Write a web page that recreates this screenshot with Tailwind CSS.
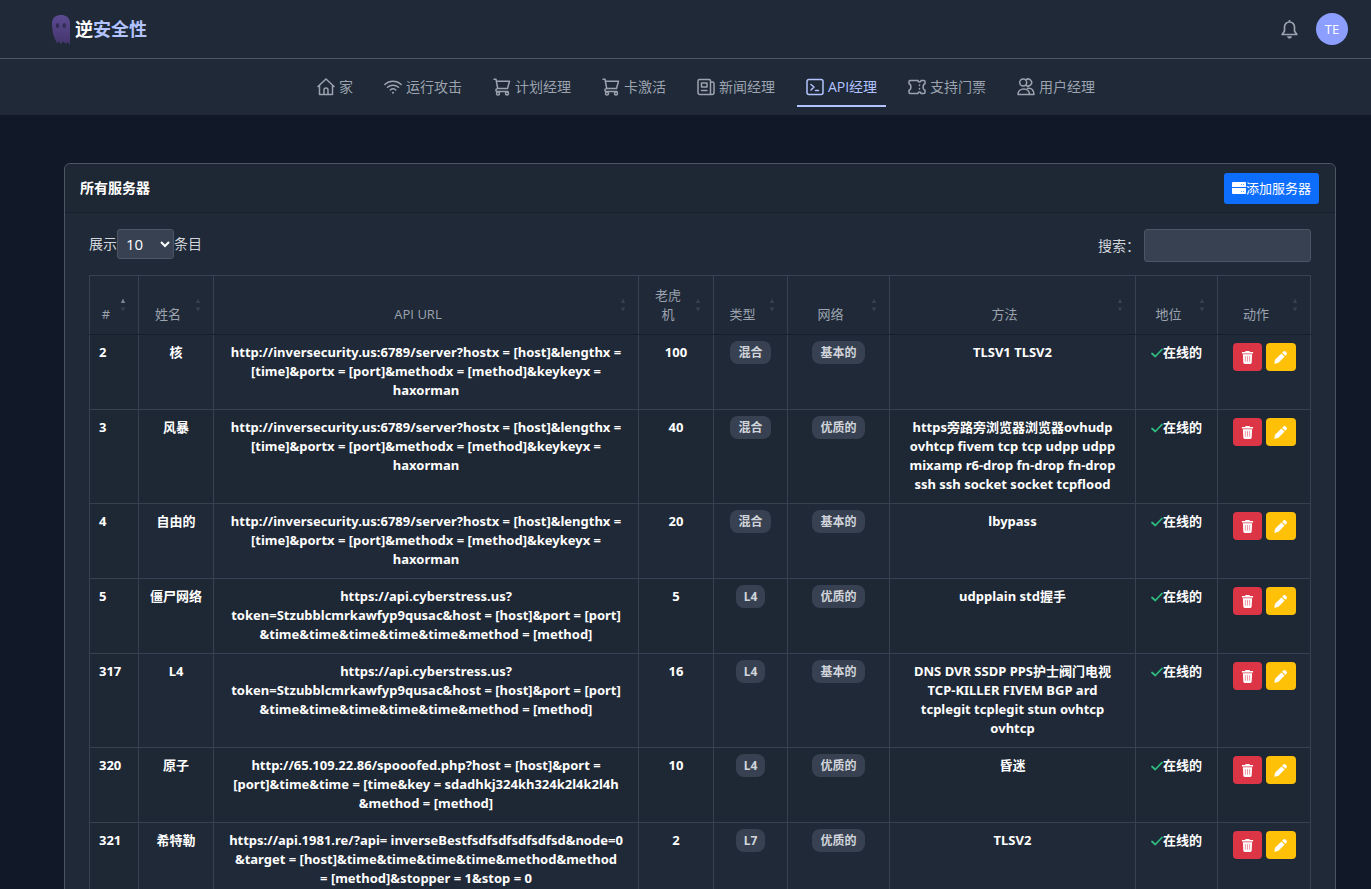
<!DOCTYPE html>
<html lang="zh-CN">
<head>
    <meta charset="UTF-8">
    <meta name="viewport" content="width=device-width, initial-scale=1.0">
    <title>API经理</title>
    <script src="https://cdn.jsdelivr.net/npm/@tailwindcss/browser@4"></script>
    <style>
        body {
            font-family: 'Open Sans', 'Noto Sans CJK SC', sans-serif;
        }
        tbody {
            font-family: 'Noto Sans', 'Noto Sans CJK SC', sans-serif;
        }
    </style>
</head>
<body class="bg-[#111827] text-[#d1d5db] text-sm">

    <!-- Iconos -->
    <svg class="hidden">
        <symbol id="trash" viewBox="0 0 14 14"><path fill="currentColor" d="M5 0h4l.7 1H13v1.800H1V1h3.300zM2 3.500h10l-.5 9a1.500 1.500 0 0 1-1.500 1.500H4a1.500 1.500 0 0 1-1.500-1.500z"/><path stroke="#dc3545" stroke-opacity=".6" stroke-width=".9" d="M4.700 5.500v6M7 5.500v6M9.300 5.500v6"/></symbol>
        <symbol id="pencil" viewBox="0 0 14 14"><path fill="currentColor" d="M8 2.600 11.400 6 4.800 12.600 1 13.600a.5.5 0 0 1-.6-.6l1-3.800zM8.800 1.800l1-1a2 2 0 0 1 2.900 0l.5.5a2 2 0 0 1 0 2.900l-1 1z"/></symbol>
        <symbol id="check" viewBox="0 0 12 12"><path fill="none" stroke="currentColor" stroke-width="1.700" stroke-linecap="round" stroke-linejoin="round" d="M1 6.500 4.300 9.500 11 2.500"/></symbol>
        <symbol id="sort" viewBox="0 0 6 14"><path fill="currentColor" d="M3 .5 5.200 5H.8zM3 13.500.8 9.500h4.400z"/></symbol>
        <symbol id="sort-asc" viewBox="0 0 6 14"><path fill="#7b8492" d="M3 .5 5.200 5H.8z"/><path fill="currentColor" d="M3 13.500.8 9.500h4.400z"/></symbol>
        <symbol id="cart" viewBox="0 0 18 18"><g fill="none" stroke="currentColor" stroke-width="1.500" stroke-linecap="round" stroke-linejoin="round"><path d="M1 1.200h2L4.700 10.500H14.500L16.500 3.200H3.400M4.700 10.500C2.300 11 2.300 13.500 4.500 13.500H15"/><circle cx="5" cy="15.500" r="1.500" fill="#1f2937"/><circle cx="14" cy="15.500" r="1.500" fill="#1f2937"/></g></symbol>
    </svg>

    <!-- Cabecera -->
    <header class="flex items-center justify-between h-[59px] bg-[#1f2937] border-b border-[#4b5563] pl-[52px] pr-[23px]">
        <a href="#" class="flex items-center gap-[5px] text-lg font-bold text-white">
            <svg class="w-[18px] h-[31px]" viewBox="0 0 18 31"><defs><linearGradient id="g" x2="0" y2="1"><stop stop-color="#5b4a92"/><stop offset="1" stop-color="#43356c"/></linearGradient></defs><path fill="url(#g)" d="M0 8C1 3 4 1 9 1s8 2 9 7v23l-2.500-3-1 1-1 1-2-2.500L9 30l-2.500-3-1 3-2.500-5C1 21 0 16 0 8z"/><ellipse cx="5.500" cy="11.500" rx="1.700" ry="2.500" fill="#312c52"/><ellipse cx="12.300" cy="11.500" rx="1.700" ry="2.500" fill="#312c52"/></svg>
            <span>逆<span class="text-[#b2c3ff]">安全性</span></span>
        </a>
        <div class="flex items-center gap-[18px]">
            <button type="button" aria-label="通知" class="text-[#9ca3af]">
                <svg class="block w-[17px] h-[19px]" viewBox="0 0 17 19" fill="none" stroke="currentColor" stroke-width="1.700" stroke-linejoin="round"><path d="M8.500 0v2M3.500 7a5 5 0 0 1 10 0v4l2.300 3.500H1.200L3.500 11z"/><path fill="currentColor" stroke="none" d="M6 16.200h5c-.4 1.600-1.300 2.300-2.500 2.300S6.400 17.800 6 16.200z"/></svg>
            </button>
            <button type="button" class="size-8 rounded-full bg-[#8c9eff] text-white text-[13px]">TE</button>
        </div>
    </header>

    <!-- Menú -->
    <nav class="flex justify-center gap-[13px] h-14 pl-[41px] bg-[#1f2937] text-[#9ca3af] [&>a]:flex [&>a]:items-center [&>a]:gap-1 [&>a]:px-[9px] [&>a]:h-12 [&>a]:pt-[10px] [&>a]:border-b-2 [&>a]:border-transparent [&_svg]:size-[18px]">
        <a href="#"><svg viewBox="0 0 18 18" fill="none" stroke="currentColor" stroke-width="1.500" stroke-linejoin="round" stroke-linecap="round"><path d="M1 8.500 9 1l8 7.500M2.500 7.500v9h13v-9M7 16.500v-4.500a2 2 0 0 1 4 0v4.500"/></svg>家</a>
        <a href="#"><svg viewBox="0 0 18 18" fill="none" stroke="currentColor" stroke-width="1.500" stroke-linecap="round"><path d="M.8 6.500c4.700-4.300 11.700-4.300 16.400 0M3.500 9.300c3.200-2.900 7.800-2.900 11 0M6.300 12c1.600-1.400 3.800-1.400 5.400 0"/><circle cx="9" cy="14.800" r="1" fill="currentColor" stroke="none"/></svg>运行攻击</a>
        <a href="#"><svg><use href="#cart"/></svg>计划经理</a>
        <a href="#"><svg><use href="#cart"/></svg>卡激活</a>
        <a href="#"><svg viewBox="0 0 18 18" fill="none" stroke="currentColor" stroke-width="1.500" stroke-linejoin="round" stroke-linecap="round"><path d="M13.500 14V3a1.500 1.500 0 0 0-1.500-1.500H2.500A1.500 1.500 0 0 0 1 3v11.500a2 2 0 0 0 2 2h12a2 2 0 0 0 2-2V5.500a1.500 1.500 0 0 0-1.500-1.500h-2M13.500 14a1.700 1.700 0 0 0 1.500 2.500M4.500 5H10v4H4.500zM4.500 12.500H10"/></svg>新闻经理</a>
        <a href="#" aria-current="page" class="text-[#b2c3ff] border-[#b2c3ff]!"><svg viewBox="0 0 18 18" fill="none" stroke="currentColor" stroke-width="1.500" stroke-linejoin="round" stroke-linecap="round"><rect x="1" y="1.500" width="16" height="15" rx="2"/><path d="m5 6.500 3 2.500-3 3M9.500 12.500H12.500"/></svg>API经理</a>
        <a href="#"><svg viewBox="0 0 18 18" fill="none" stroke="currentColor" stroke-width="1.500" stroke-linejoin="round" stroke-linecap="round"><path d="M10 2.500H2a1 1 0 0 0-1 1v2.300c2.500.7 2.500 5.700 0 6.400v2.300a1 1 0 0 0 1 1h8M13 2.500h3a1 1 0 0 1 1 1v2.300c-2.500.7-2.500 5.700 0 6.400v2.300a1 1 0 0 1-1 1h-3M10 2.500a1.500 1.500 0 0 0 3 0M10 15.500a1.500 1.500 0 0 1 3 0M11.500 7v.5M11.500 10.500v.5"/></svg>支持门票</a>
        <a href="#"><svg viewBox="0 0 18 18" fill="none" stroke="currentColor" stroke-width="1.500" stroke-linejoin="round" stroke-linecap="round"><circle cx="6.200" cy="4.500" r="3.500"/><path d="M9 1.700a3.500 3.500 0 1 1 0 5.600M1 16.500c0-7.500 11.500-7.500 11.500 0zM10.500 10.300c4-.8 6.500 2 6.500 6.200h-4.500"/></svg>用户经理</a>
    </nav>

    <main class="ml-16 mr-[35px] mt-12">
        <section class="bg-[#1f2937] border border-[#4b5563] rounded-md">
            <div class="flex items-center justify-between h-[49px] pl-[15px] pr-4 bg-[#1e2834] border-b border-[#19212d] rounded-t-md">
                <h1 class="font-bold text-white">所有服务器</h1>
                <button type="button" class="flex items-center h-[31px] px-2 rounded-[3px] bg-[#0d6efd] text-white text-[13px]">
                    <svg class="size-[14px]" viewBox="0 0 14 14"><path fill="currentColor" d="M1 1h12a1 1 0 0 1 1 1v4H0V2a1 1 0 0 1 1-1zM0 7h14v5a1 1 0 0 1-1 1H1a1 1 0 0 1-1-1z"/><path fill="#0d6efd" fill-opacity=".6" d="M9 3h1v1H9zM11 3h1v1h-1zM9 10h1v1H9zM11 10h1v1h-1z"/></svg>添加服务器
                </button>
            </div>

            <div class="px-6 py-4">
                <div class="flex justify-between mb-[13px]">
                    <label class="flex items-center h-[30px]">展示<select class="h-[30px] w-[57px] pl-1 text-[15px] bg-[#374151] border border-[#4b5563] rounded-[3px] text-white"><option>10</option></select>条目</label>
                    <label class="flex items-center gap-1">搜索：<input type="search" class="w-[167px] h-[33px] bg-[#374151] border border-[#4b5563] rounded-[3px]"></label>
                </div>

                <!-- Tabla de servidores -->
                <table class="w-full table-fixed border-collapse text-[13px] leading-[19px] text-center [&_th]:border [&_td]:border [&_th]:border-[#374151] [&_td]:border-[#374151] [&_th]:relative [&_th]:font-normal [&_th]:align-bottom [&_th]:pl-[10px] [&_th]:pr-[26px] [&_th]:py-[10px] [&_th>svg]:absolute [&_th>svg]:right-3 [&_th>svg]:bottom-[22px] [&_th>svg]:w-[6px] [&_th>svg]:h-[14px] [&_td]:align-top [&_td]:pt-2 [&_td]:pb-[9px] [&_td:first-child]:text-left [&_td:first-child]:pl-[9px] [&_tbody_tr:nth-child(even)]:bg-[#1e2834] [&_td:first-child]:bg-[#1e2834] [&_td:has(>span)]:pt-[6px] [&_td>span]:inline-block [&_td>span]:align-top [&_td>span]:h-[23px] [&_td>span]:leading-[23px] [&_td>span]:px-2 [&_td>span]:text-xs [&_td>span]:rounded-lg [&_td>span]:bg-[#374151] [&_td>span]:text-[#d1d5db] [&_button]:inline-flex [&_button]:items-center [&_button]:justify-center [&_button]:align-top [&_button]:w-[29px] [&_button]:h-7 [&_button]:rounded-[4px] [&_button]:mx-[2px] [&_button]:bg-[#dc3545] [&_button:last-child]:w-[30px] [&_button:last-child]:bg-[#ffc107] [&_button>svg]:size-[13px] [&_td>svg]:inline [&_td>svg]:size-3 [&_td>svg]:text-[#2dbd7e]">
                    <colgroup><col class="w-[49px]"><col class="w-[75px]"><col><col class="w-[75px]"><col class="w-[74px]"><col class="w-[102px]"><col class="w-[246px]"><col class="w-[82px]"><col class="w-[93px]"></colgroup>
                    <thead class="text-[#9ca3af] [&_svg]:text-[#374151] [&_th]:border-b-[#181f2a]!">
                        <tr>
                            <th>#<svg><use href="#sort-asc"/></svg></th>
                            <th>姓名<svg><use href="#sort"/></svg></th>
                            <th>API URL<svg><use href="#sort"/></svg></th>
                            <th>老虎机<svg><use href="#sort"/></svg></th>
                            <th>类型<svg><use href="#sort"/></svg></th>
                            <th>网络<svg><use href="#sort"/></svg></th>
                            <th>方法<svg><use href="#sort"/></svg></th>
                            <th>地位<svg><use href="#sort"/></svg></th>
                            <th>动作<svg><use href="#sort"/></svg></th>
                        </tr>
                    </thead>
                    <tbody class="font-bold text-white">
                        <tr>
                            <td>2</td>
                            <td>核</td>
                            <td>http://inversecurity.us:6789/server?hostx = [host]&amp;lengthx =<br>[time]&amp;portx = [port]&amp;methodx = [method]&amp;keykeyx =<br>haxorman</td>
                            <td>100</td>
                            <td><span>混合</span></td>
                            <td><span>基本的</span></td>
                            <td>TLSV1 TLSV2</td>
                            <td><svg><use href="#check"/></svg>在线的</td>
                            <td><button type="button" aria-label="删除"><svg><use href="#trash"/></svg></button><button type="button" aria-label="编辑"><svg><use href="#pencil"/></svg></button></td>
                        </tr>
                        <tr>
                            <td>3</td>
                            <td>风暴</td>
                            <td>http://inversecurity.us:6789/server?hostx = [host]&amp;lengthx =<br>[time]&amp;portx = [port]&amp;methodx = [method]&amp;keykeyx =<br>haxorman</td>
                            <td>40</td>
                            <td><span>混合</span></td>
                            <td><span>优质的</span></td>
                            <td>https旁路旁浏览器浏览器ovhudp<br>ovhtcp fivem tcp tcp udpp udpp<br>mixamp r6-drop fn-drop fn-drop<br>ssh ssh socket socket tcpflood</td>
                            <td><svg><use href="#check"/></svg>在线的</td>
                            <td><button type="button" aria-label="删除"><svg><use href="#trash"/></svg></button><button type="button" aria-label="编辑"><svg><use href="#pencil"/></svg></button></td>
                        </tr>
                        <tr>
                            <td>4</td>
                            <td>自由的</td>
                            <td>http://inversecurity.us:6789/server?hostx = [host]&amp;lengthx =<br>[time]&amp;portx = [port]&amp;methodx = [method]&amp;keykeyx =<br>haxorman</td>
                            <td>20</td>
                            <td><span>混合</span></td>
                            <td><span>基本的</span></td>
                            <td>lbypass</td>
                            <td><svg><use href="#check"/></svg>在线的</td>
                            <td><button type="button" aria-label="删除"><svg><use href="#trash"/></svg></button><button type="button" aria-label="编辑"><svg><use href="#pencil"/></svg></button></td>
                        </tr>
                        <tr>
                            <td>5</td>
                            <td>僵尸网络</td>
                            <td>https://api.cyberstress.us?<br>token=Stzubblcmrkawfyp9qusac&amp;host = [host]&amp;port = [port]<br>&amp;time&amp;time&amp;time&amp;time&amp;time&amp;method = [method]</td>
                            <td>5</td>
                            <td><span>L4</span></td>
                            <td><span>优质的</span></td>
                            <td>udpplain std握手</td>
                            <td><svg><use href="#check"/></svg>在线的</td>
                            <td><button type="button" aria-label="删除"><svg><use href="#trash"/></svg></button><button type="button" aria-label="编辑"><svg><use href="#pencil"/></svg></button></td>
                        </tr>
                        <tr>
                            <td>317</td>
                            <td>L4</td>
                            <td>https://api.cyberstress.us?<br>token=Stzubblcmrkawfyp9qusac&amp;host = [host]&amp;port = [port]<br>&amp;time&amp;time&amp;time&amp;time&amp;time&amp;method = [method]</td>
                            <td>16</td>
                            <td><span>L4</span></td>
                            <td><span>基本的</span></td>
                            <td>DNS DVR SSDP PPS护士阀门电视<br>TCP-KILLER FIVEM BGP ard<br>tcplegit tcplegit stun ovhtcp<br>ovhtcp</td>
                            <td><svg><use href="#check"/></svg>在线的</td>
                            <td><button type="button" aria-label="删除"><svg><use href="#trash"/></svg></button><button type="button" aria-label="编辑"><svg><use href="#pencil"/></svg></button></td>
                        </tr>
                        <tr>
                            <td>320</td>
                            <td>原子</td>
                            <td>http://65.109.22.86/spooofed.php?host = [host]&amp;port =<br>[port]&amp;time&amp;time = [time&amp;key = sdadhkj324kh324k2l4k2l4h<br>&amp;method = [method]</td>
                            <td>10</td>
                            <td><span>L4</span></td>
                            <td><span>优质的</span></td>
                            <td>昏迷</td>
                            <td><svg><use href="#check"/></svg>在线的</td>
                            <td><button type="button" aria-label="删除"><svg><use href="#trash"/></svg></button><button type="button" aria-label="编辑"><svg><use href="#pencil"/></svg></button></td>
                        </tr>
                        <tr>
                            <td>321</td>
                            <td>希特勒</td>
                            <td>https://api.1981.re/?api= inverseBestfsdfsdfsdfsdfsd&amp;node=0<br>&amp;target = [host]&amp;time&amp;time&amp;time&amp;time&amp;method&amp;method<br>= [method]&amp;stopper = 1&amp;stop = 0</td>
                            <td>2</td>
                            <td><span>L7</span></td>
                            <td><span>优质的</span></td>
                            <td>TLSV2</td>
                            <td><svg><use href="#check"/></svg>在线的</td>
                            <td><button type="button" aria-label="删除"><svg><use href="#trash"/></svg></button><button type="button" aria-label="编辑"><svg><use href="#pencil"/></svg></button></td>
                        </tr>
                    </tbody>
                </table>
            </div>
        </section>
    </main>

</body>
</html>
